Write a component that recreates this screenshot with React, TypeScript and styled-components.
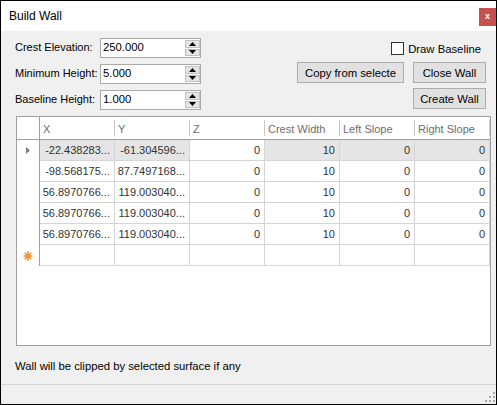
import * as React from "react";
import styled, { createGlobalStyle } from "styled-components";

const GlobalStyle = createGlobalStyle`
  html, body {
    margin: 0;
    padding: 0;
    background: #ffffff;
  }
  body {
    font-family: "Liberation Sans", Arial, sans-serif;
    font-size: 11.3px;
    color: #000000;
  }
`;

type Row = {
  x: string;
  y: string;
  z: string;
  crest: string;
  left: string;
  right: string;
};

const ROWS: Row[] = [
  { x: "-22.438283...", y: "-61.304596...", z: "0", crest: "10", left: "0", right: "0" },
  { x: "-98.568175...", y: "87.7497168...", z: "0", crest: "10", left: "0", right: "0" },
  { x: "56.8970766...", y: "119.003040...", z: "0", crest: "10", left: "0", right: "0" },
  { x: "56.8970766...", y: "119.003040...", z: "0", crest: "10", left: "0", right: "0" },
  { x: "56.8970766...", y: "119.003040...", z: "0", crest: "10", left: "0", right: "0" },
];

const COLUMNS = ["X", "Y", "Z", "Crest Width", "Left Slope", "Right Slope"];

const FIELDS = [
  { label: "Crest Elevation:", value: "250.000" },
  { label: "Minimum Height:", value: "5.000" },
  { label: "Baseline Height:", value: "1.000" },
];

const Arrow = ({ down }: { down?: boolean }) => (
  <svg width="7" height="4" viewBox="0 0 7 4">
    <polygon points={down ? "0,0 7,0 3.5,4" : "3.5,0 7,4 0,4"} fill="#000" />
  </svg>
);

const Spinner = ({ value }: { value: string }) => (
  <SpinBox>
    <SpinValue>{value}</SpinValue>
    <SpinButtons>
      <SpinButton>
        <Arrow />
      </SpinButton>
      <SpinButton>
        <Arrow down />
      </SpinButton>
    </SpinButtons>
  </SpinBox>
);

const CurrentRowMark = () => (
  <svg width="4" height="7" viewBox="0 0 4 7">
    <polygon points="0,0 4,3.5 0,7" fill="#7a7a7a" />
  </svg>
);

const NewRowMark = () => (
  <svg width="10" height="10" viewBox="0 0 10 10">
    <g stroke="#f5922f" strokeWidth="1.6" strokeLinecap="round">
      <line x1="5" y1="1" x2="5" y2="9" />
      <line x1="1" y1="5" x2="9" y2="5" />
      <line x1="2.2" y1="2.2" x2="7.8" y2="7.8" />
      <line x1="7.8" y1="2.2" x2="2.2" y2="7.8" />
    </g>
    <circle cx="5" cy="5" r="2.2" fill="#f5922f" />
  </svg>
);

const SizeGrip = () => (
  <svg width="11" height="11" viewBox="0 0 11 11">
    <g fill="#a9a9a9">
      <rect x="8" y="0" width="2" height="2" />
      <rect x="4" y="4" width="2" height="2" />
      <rect x="8" y="4" width="2" height="2" />
      <rect x="0" y="8" width="2" height="2" />
      <rect x="4" y="8" width="2" height="2" />
      <rect x="8" y="8" width="2" height="2" />
    </g>
  </svg>
);

const App = () => (
  <>
    <GlobalStyle />
    <Window>
      <TitleBar>
        <Title>Build Wall</Title>
        <CloseButton>x</CloseButton>
      </TitleBar>
      <Body>
        <TopArea>
          <Fields>
            {FIELDS.map((field) => (
              <FieldRow key={field.label}>
                <FieldLabel>{field.label}</FieldLabel>
                <Spinner value={field.value} />
              </FieldRow>
            ))}
          </Fields>
          <Actions>
            <CheckRow>
              <CheckBox />
              <span>Draw Baseline</span>
            </CheckRow>
            <ButtonRow>
              <Button width={107}>Copy from selecte</Button>
              <Button width={73}>Close Wall</Button>
            </ButtonRow>
            <ButtonRow>
              <Button width={73}>Create Wall</Button>
            </ButtonRow>
          </Actions>
        </TopArea>
        <GridView>
          <Table>
            <CornerCell />
            {COLUMNS.map((col) => (
              <HeaderCell key={col}>{col}</HeaderCell>
            ))}
            {ROWS.map((row, i) => (
              <React.Fragment key={i}>
                <RowHeader>{i === 0 && <CurrentRowMark />}</RowHeader>
                <Cell selected={i === 0}>{row.x}</Cell>
                <Cell selected={i === 0}>{row.y}</Cell>
                <Cell>{row.z}</Cell>
                <Cell selected={i === 0}>{row.crest}</Cell>
                <Cell selected={i === 0}>{row.left}</Cell>
                <Cell selected={i === 0}>{row.right}</Cell>
              </React.Fragment>
            ))}
            <RowHeader>
              <NewRowMark />
            </RowHeader>
            {COLUMNS.map((col) => (
              <Cell key={col} />
            ))}
          </Table>
        </GridView>
        <Note>Wall will be clipped by selected surface if any</Note>
        <StatusStrip>
          <SizeGrip />
        </StatusStrip>
      </Body>
    </Window>
  </>
);

const Window = styled.div`
  width: 497px;
  height: 405px;
  box-sizing: border-box;
  border: 1px solid #000000;
  display: flex;
  flex-direction: column;
  background: #f0f0f0;
`;

const TitleBar = styled.div`
  flex: none;
  height: 30px;
  background: #ffffff;
  display: flex;
  justify-content: space-between;
  align-items: flex-start;
`;

const Title = styled.div`
  font-size: 12px;
  line-height: 14px;
  padding: 8px 0 0 8px;
  color: #000000;
`;

const CloseButton = styled.div`
  width: 17px;
  height: 18px;
  margin-top: 7px;
  background: #c75050;
  color: #ffffff;
  font-weight: bold;
  font-size: 9px;
  line-height: 17px;
  text-align: center;
`;

const Body = styled.div`
  flex: 1;
  display: flex;
  flex-direction: column;
`;

const TopArea = styled.div`
  display: flex;
  justify-content: space-between;
  padding: 0 10px 0 14px;
`;

const Fields = styled.div`
  display: flex;
  flex-direction: column;
  gap: 6px;
  padding-top: 7px;
`;

const FieldRow = styled.div`
  display: flex;
  align-items: center;
  height: 20px;
`;

const FieldLabel = styled.span`
  width: 85px;
  padding-bottom: 2px;
  white-space: nowrap;
  font-size: 11px;
`;

const SpinBox = styled.div`
  width: 101px;
  height: 20px;
  box-sizing: border-box;
  border: 1px solid #a9a9a9;
  background: #ffffff;
  display: flex;
`;

const SpinValue = styled.span`
  flex: 1;
  padding-left: 2px;
  line-height: 17px;
`;

const SpinButtons = styled.div`
  width: 15px;
  display: flex;
  flex-direction: column;
  gap: 1px;
  padding: 1px 0;
`;

const SpinButton = styled.div`
  flex: 1;
  box-sizing: border-box;
  background: #e5e5e5;
  border: 1px solid #c2c2c2;
  display: flex;
  align-items: center;
  justify-content: center;
`;

const Actions = styled.div`
  display: flex;
  flex-direction: column;
  align-items: flex-end;
  gap: 5px;
  padding-top: 11px;
`;

const CheckRow = styled.label`
  display: flex;
  align-items: center;
  gap: 4px;
  height: 13px;
  margin: 0 5px 2px 0;
`;

const CheckBox = styled.span`
  width: 13px;
  height: 13px;
  box-sizing: border-box;
  border: 1px solid #333333;
  background: #ffffff;
`;

const ButtonRow = styled.div`
  display: flex;
  gap: 9px;
`;

const Button = styled.div<{ width: number }>`
  width: ${(props) => props.width}px;
  height: 21px;
  box-sizing: border-box;
  border: 1px solid #adadad;
  background: #e1e1e1;
  display: flex;
  align-items: center;
  justify-content: center;
  white-space: nowrap;
  overflow: hidden;
`;

const GridView = styled.div`
  margin: 6px 5px 0 15px;
  height: 230px;
  box-sizing: border-box;
  border: 1px solid #a0a0a0;
  background: #ffffff;
`;

const Table = styled.div`
  display: grid;
  grid-template-columns: 23px repeat(6, 75px);
  grid-template-rows: 23px;
  grid-auto-rows: 21px;
  color: #333333;
  font-size: 11px;
`;

const CornerCell = styled.div`
  box-sizing: border-box;
  border-right: 1px solid #a0a0a0;
  border-bottom: 1px solid #a0a0a0;
`;

const HeaderCell = styled.div`
  box-sizing: border-box;
  border-bottom: 1px solid #a0a0a0;
  padding: 1px 0 0 3px;
  display: flex;
  align-items: center;
  color: #6d6d6d;
  white-space: nowrap;
  background: linear-gradient(#c6c6c6, #c6c6c6) right 3px / 1px calc(100% - 6px)
    no-repeat;
`;

const RowHeader = styled.div`
  box-sizing: border-box;
  border-right: 1px solid #a0a0a0;
  display: flex;
  align-items: center;
  justify-content: center;
  padding-right: 1px;
`;

const Cell = styled.div<{ selected?: boolean }>`
  box-sizing: border-box;
  border-right: 1px solid #d5d5d5;
  border-bottom: 1px solid #d5d5d5;
  background: ${(props) => (props.selected ? "#e5e5e5" : "#ffffff")};
  display: flex;
  align-items: center;
  justify-content: flex-end;
  padding-right: 4px;
  white-space: nowrap;
  overflow: hidden;
`;

const Note = styled.div`
  margin-top: 14px;
  padding-left: 14px;
  line-height: 13px;
`;

const StatusStrip = styled.div`
  margin-top: auto;
  height: 20px;
  box-sizing: border-box;
  border-top: 1px solid #d7d7d7;
  display: flex;
  justify-content: flex-end;
  align-items: flex-end;
  padding: 0 0 1px 0;
`;

export default App;
